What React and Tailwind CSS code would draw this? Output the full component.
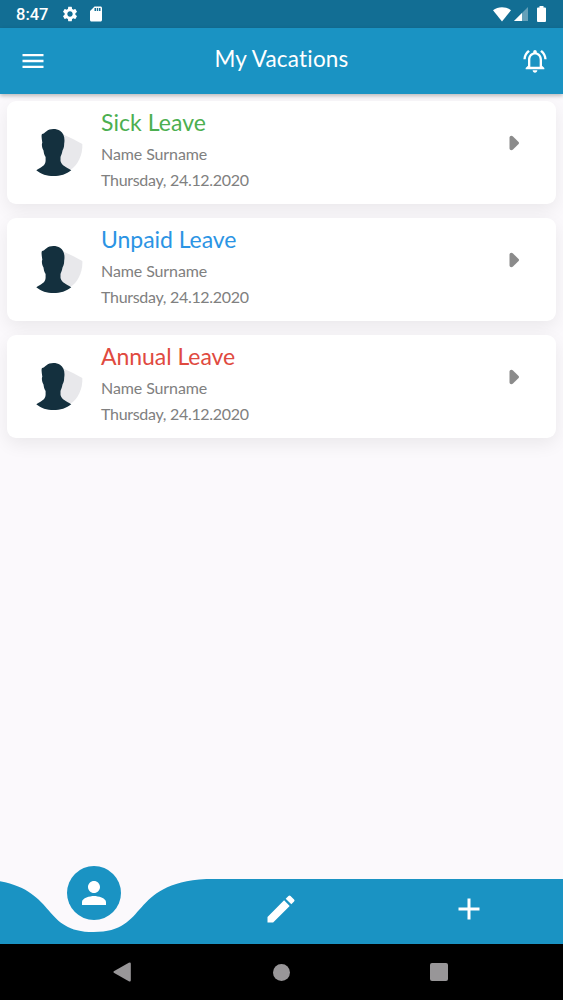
import {
  MdAdd,
  MdEdit,
  MdMenu,
  MdOutlineNotificationsActive,
  MdPerson,
  MdSdCard,
  MdSettings,
} from "react-icons/md";

const vacations = [
  { title: "Sick Leave", style: "text-[#4caf50] tracking-[0.05px]", name: "Name Surname", date: "Thursday, 24.12.2020" },
  { title: "Unpaid Leave", style: "text-[#2b94e4] tracking-[-0.05px]", name: "Name Surname", date: "Thursday, 24.12.2020" },
  { title: "Annual Leave", style: "text-[#e04a3f] tracking-[-0.05px]", name: "Name Surname", date: "Thursday, 24.12.2020" },
];

const StatusBar = () => (
  <div className="h-7 shrink-0 bg-[#126e94] text-white flex items-center justify-between pl-4 pr-[17px]">
    <div className="flex items-center">
      <span className="w-[45px] pt-px font-[Roboto] text-[16.500px] font-medium leading-7">8:47</span>
      <MdSettings className="size-[18px]" />
      <MdSdCard className="ml-[8px] size-[18px]" />
    </div>
    <div className="flex items-center">
      <svg className="w-[18px] h-[15px]" viewBox="0 0 18 15" fill="currentColor">
        <path d="M0 3.2C5-.8 13-.8 18 3.2L9 14.5z" />
      </svg>
      <svg className="ml-[3px] w-[14px] h-[14px]" viewBox="0 0 14 14" fill="currentColor">
        <path d="M0 14L14 0V14z" opacity=".35" />
        <path d="M0 14L8 6V14z" />
      </svg>
      <svg className="ml-[9px] w-[9px] h-[16px]" viewBox="0 0 9 16" fill="currentColor">
        <path d="M2.5 0h4v1.6H8q1 0 1 1V15q0 1-1 1H1q-1 0-1-1V2.6q0-1 1-1h1.5z" />
      </svg>
    </div>
  </div>
);

const Avatar = () => (
  <svg className="w-[48px] h-[48px] shrink-0" viewBox="0 0 48 48">
    <path d="M24 4L37 10L46.300 15C47 25 42 36.500 34 41L22 34z" fill="#e8e8eb" />
    <path
      d="M10.500 2.200C13.500-.5 20.500-.5 24 1.800C27.500 4 28.800 8 28.400 13C28 14.500 28.400 17 27.600 19C27 20.500 26.700 21 26.400 22C25.900 25 25 26.500 24.500 28V32C26 37 29.500 37.500 35.300 41.200C26 49 9 49 .3 41.200C6 37.500 9 37 9.600 32V28C8.300 26 7.800 24 7.500 21.500C6 19 5.700 16 6 14.500C6.800 13.500 5.800 12 5.800 10C5.600 8 5.300 6.500 6 5C7.500 5 8.500 3.800 10.500 2.200z"
      fill="#14303e"
    />
  </svg>
);

const VacationCard = ({ title, style, name, date }) => (
  <div className="h-[103px] rounded-[9px] bg-white flex items-start pl-[29px] pr-[36px] shadow-[0_6px_18px_rgba(0,0,0,0.07)]">
    <div className="pt-[28px]">
      <Avatar />
    </div>
    <div className="ml-[17px] flex-1 pt-[7px] whitespace-nowrap text-[#808080]">
      <h2 className={`text-[23px] leading-[29px] ${style}`}>{title}</h2>
      <p className="mt-[4px] text-[16px] leading-[26px] tracking-[-0.1px]">{name}</p>
      <p className="text-[16px] leading-[26px] tracking-[-0.3px]">{date}</p>
    </div>
    <svg className="mt-[34px] w-[11px] h-[16px]" viewBox="0 0 11 16" fill="#8b8b8b">
      <path d="M.5 2.800C.5 1 2.500.2 4 1.500L9.600 7Q10.500 8 9.600 9L4 14.500C2.500 15.800.5 15 .5 13.200z" />
    </svg>
  </div>
);

const BottomBar = () => (
  <div className="relative h-[65px] shrink-0 text-white">
    <svg className="absolute inset-0 w-full h-full" viewBox="0 0 563 65" fill="#1a93c3">
      <path d="M-18.800 0C60 4.400 37.500 53 93.800 53S127.600 4.400 206.400 0H563V65H-18.800z" />
    </svg>
    <div className="relative grid grid-cols-3 h-full justify-items-center items-center">
      <div className="relative -top-[18.500px] size-[54px] rounded-full bg-[#1a93c3] flex items-center justify-center">
        <MdPerson className="size-[36px]" />
      </div>
      <MdEdit className="relative -top-[3px] size-[36px]" />
      <MdAdd className="relative -top-[3px] size-[36px]" />
    </div>
  </div>
);

const SystemNav = () => (
  <div className="h-[56px] shrink-0 bg-black flex items-center justify-between pl-[113px] pr-[115px]">
    <svg className="size-[20px]" viewBox="0 0 20 20" fill="#989698">
      <path d="M.8 9.300L15.800.7Q17.800 0 17.800 1.700V18.300Q17.800 20 15.800 19.300L.8 10.700Q0 10 .8 9.300z" />
    </svg>
    <div className="size-[17px] rounded-full bg-[#989698]" />
    <div className="size-[18px] rounded-[2px] bg-[#989698]" />
  </div>
);

const App = () => {
  return (
    <div className="w-full h-[1000px] flex flex-col overflow-hidden bg-[#fbf9fc] font-[Lato,sans-serif]">
      <StatusBar />
      <header className="relative z-10 h-[66px] shrink-0 bg-[#1a93c3] text-white grid grid-cols-3 items-center pl-[19px] pr-[14px] shadow-[0_2px_4px_rgba(0,0,0,0.25)]">
        <MdMenu className="size-[28px]" />
        <h1 className="justify-self-center pb-[4px] pr-[5px] text-[22.500px] leading-7 tracking-[0.2px] whitespace-nowrap">My Vacations</h1>
        <MdOutlineNotificationsActive className="size-[28px] justify-self-end" />
      </header>
      <main className="flex-1 flex flex-col gap-[14px] px-[7px] pt-[7px]">
        {vacations.map((item) => (
          <VacationCard key={item.title} {...item} />
        ))}
      </main>
      <BottomBar />
      <SystemNav />
    </div>
  );
};

export default App;
